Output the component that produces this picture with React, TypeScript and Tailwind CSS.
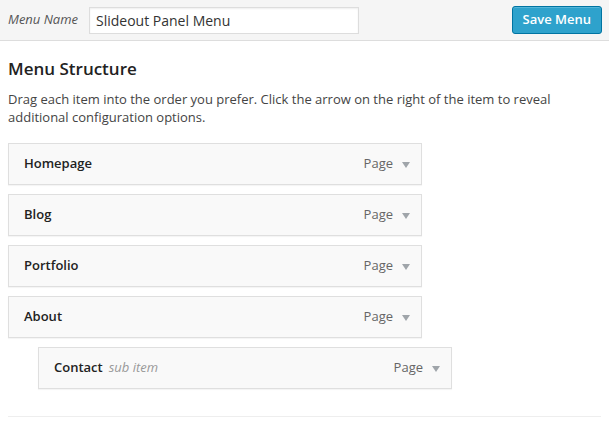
import { useState } from "react";

type MenuItem = {
  title: string;
  type: string;
  depth: number;
  note?: string;
};

const ITEMS: MenuItem[] = [
  { title: "Homepage", type: "Page", depth: 0 },
  { title: "Blog", type: "Page", depth: 0 },
  { title: "Portfolio", type: "Page", depth: 0 },
  { title: "About", type: "Page", depth: 0 },
  { title: "Contact", type: "Page", depth: 1, note: "sub item" },
];

function MenuRow({ item }: { item: MenuItem }) {
  return (
    <li className={item.depth ? "pl-[30px]" : ""}>
      <div className="flex h-[42px] w-[414px] items-center justify-between border border-[#dfdfdf] bg-[#f9f9f9] pl-[15px] pr-[10px] shadow-[0_1px_1px_rgba(0,0,0,0.04)]">
        <span className="flex items-baseline gap-[6px]">
          <span className="text-[13px] font-semibold text-[#222]">{item.title}</span>
          {item.note ? <span className="text-[13px] italic text-[#999]">{item.note}</span> : null}
        </span>
        <span className="flex items-center gap-[8px] text-[13px] text-[#666]">
          {item.type}
          <svg width="10" height="8" viewBox="0 0 10 8" className="mt-[2px]">
            <path d="M1 1h8L5 7z" fill="#a0a5aa" />
          </svg>
        </span>
      </div>
    </li>
  );
}

export default function App() {
  const [name, setName] = useState("Slideout Panel Menu");

  return (
    <div className="h-[428px] w-[609px] bg-white font-['Open_Sans',sans-serif] text-[#444]">
      <div className="flex h-[41px] items-center justify-between border-b border-[#dddddd] bg-[#f5f5f5] pl-[8px] pr-[7px]">
        <label className="flex items-center gap-[11px]">
          <span className="text-[13px] italic text-[#555]">Menu Name</span>
          <input
            className="h-[27px] w-[270px] border border-[#dddddd] bg-white px-[6px] text-[14px] text-[#333] shadow-[inset_0_1px_2px_rgba(0,0,0,0.07)] outline-none"
            value={name}
            onChange={(e) => setName(e.target.value)}
          />
        </label>
        <button
          type="button"
          className="h-[28px] rounded-[3px] border border-[#0074a2] bg-[#2ea2cc] px-[10px] text-[13px] font-semibold text-white shadow-[inset_0_1px_0_rgba(120,200,230,0.5)]"
        >
          Save Menu
        </button>
      </div>

      <div className="px-[8px]">
        <h3 className="mt-[15px] text-[17px] font-semibold text-[#222]">Menu Structure</h3>
        <p className="mt-[8px] text-[13px] leading-[18px] text-[#444]">
          Drag each item into the order you prefer. Click the arrow on the right of the item to reveal
          additional configuration options.
        </p>
        <ul className="mt-[17px] flex flex-col gap-[9px]">
          {ITEMS.map((item) => (
            <MenuRow key={item.title} item={item} />
          ))}
        </ul>
        <div className="mt-[27px] border-t border-[#eeeeee]" />
      </div>
    </div>
  );
}
